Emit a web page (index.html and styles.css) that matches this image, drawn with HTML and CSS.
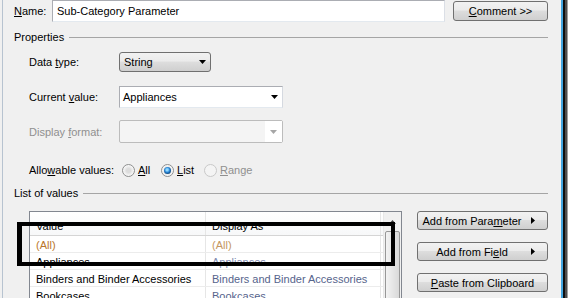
FILE: index.html
```html
<!DOCTYPE html>
<html lang="en">
<head>
  <meta charset="UTF-8" />
  <title>Edit Parameter</title>
  <link rel="stylesheet" href="styles.css">
</head>
<body>

<div class="window">
  <div class="dialog">

    <div class="name-row">
      <span class="name-label"><u>N</u>ame:</span>
      <div class="textbox name-box">Sub-Category Parameter</div>
      <button class="btn comment-btn"><u>C</u>omment &gt;&gt;</button>
    </div>

    <div class="group-title props-title">Properties</div>

    <div class="field row-type">
      <span class="field-label">Data <u>t</u>ype:</span>
      <div class="btn select">
        <span>String</span>
        <svg width="7" height="4" viewBox="0 0 7 4"><polygon points="0,0 7,0 3.5,4" fill="#000"/></svg>
      </div>
    </div>

    <div class="field row-current">
      <span class="field-label">Current <u>v</u>alue:</span>
      <div class="combo">
        <span>Appliances</span>
        <svg width="7" height="4" viewBox="0 0 7 4"><polygon points="0,0 7,0 3.5,4" fill="#000"/></svg>
      </div>
    </div>

    <div class="field row-format">
      <span class="field-label disabled">Display <u>f</u>ormat:</span>
      <div class="combo combo-off">
        <span class="combo-fill"></span>
        <span class="combo-drop">
          <svg width="7" height="4" viewBox="0 0 7 4"><polygon points="0,0 7,0 3.5,4" fill="#a6a6a6"/></svg>
        </span>
      </div>
    </div>

    <div class="field row-allow">
      <span class="field-label">Allo<u>w</u>able values:</span>
      <div class="choices">
        <span class="choice choice-all"><span class="radio"></span><span><u>A</u>ll</span></span>
        <span class="choice choice-list"><span class="radio on"><span class="dot"></span></span><span><u>L</u>ist</span></span>
        <span class="choice disabled"><span class="radio off"></span><span><u>R</u>ange</span></span>
      </div>
    </div>

    <div class="group-title list-title">List of values</div>

    <div class="values">
      <div class="listbox">
        <div class="cols">
          <div class="row head">
            <div class="cell c1">Value</div>
            <div class="cell c2">Display As</div>
          </div>
          <div class="row">
            <div class="cell c1 all">(All)</div>
            <div class="cell c2 all-alias">(All)</div>
          </div>
          <div class="row">
            <div class="cell c1">Appliances</div>
            <div class="cell c2 alias-light">Appliances</div>
          </div>
          <div class="row">
            <div class="cell c1">Binders and Binder Accessories</div>
            <div class="cell c2 alias">Binders and Binder Accessories</div>
          </div>
          <div class="row">
            <div class="cell c1">Bookcases</div>
            <div class="cell c2 alias">Bookcases</div>
          </div>
        </div>
        <div class="scrollbar">
          <div class="sb-up">
            <svg width="7" height="4" viewBox="0 0 7 4"><polygon points="0,4 7,4 3.5,0" fill="#3c3c3c"/></svg>
          </div>
          <div class="sb-thumb"></div>
        </div>
      </div>

      <div class="side">
        <button class="btn more">
          <span class="more-label">Add from Para<u>m</u>eter</span>
          <span class="caret"><svg width="4" height="7" viewBox="0 0 4 7"><polygon points="0,0 4,3.5 0,7" fill="#000"/></svg></span>
        </button>
        <button class="btn more">
          <span class="more-label">Add from Fi<u>e</u>ld</span>
          <span class="caret"><svg width="4" height="7" viewBox="0 0 4 7"><polygon points="0,0 4,3.5 0,7" fill="#000"/></svg></span>
        </button>
        <button class="btn side-btn"><u>P</u>aste from Clipboard</button>
      </div>
    </div>

  </div>
  <div class="frame"></div>
</div>

<div class="callout"></div>

</body>
</html>
```

FILE: styles.css
```css
body {
  margin: 0;
  background: #f0f0f0;
  font-family: "Liberation Sans", Arial, sans-serif;
  font-size: 11px;
  color: #000;
  overflow: hidden;
}

u {
  text-decoration: underline;
  text-underline-offset: 1px;
}

.window {
  display: flex;
  width: 568px;
  height: 298px;
}

.dialog {
  width: 559px;
  margin-left: 2px;
  border-left: 1px solid #b7c3d0;
  padding: 0 13px 0 11px;
  box-sizing: border-box;
}

.frame {
  width: 7px;
  box-sizing: border-box;
  border-left: 2px solid #42a5e0;
  background: linear-gradient(to right, #0e0e0e 0 2px, #4d4d4d 2px 4px, #a0a0a0 4px);
}

/* buttons */
.btn {
  box-sizing: border-box;
  border: 1px solid #707070;
  border-radius: 3px;
  background: linear-gradient(#f2f2f2, #ebebeb 45%, #dddddd 50%, #cfcfcf);
  font: inherit;
  color: #000;
  padding: 0;
}

/* name row */
.name-row {
  display: flex;
  align-items: center;
  height: 22px;
}

.name-label {
  width: 38px;
}

.textbox {
  box-sizing: border-box;
  height: 22px;
  border: 1px solid #abadb3;
  border-right-color: #dbdfe6;
  border-bottom-color: #e3e9ef;
  background: #fff;
  padding: 0 4px;
  line-height: 20px;
}

.name-box {
  width: 393px;
}

.comment-btn {
  margin-left: 8px;
  width: 95px;
  height: 20px;
}

/* group headings */
.group-title {
  display: flex;
  align-items: center;
  height: 14px;
}

.group-title::after {
  content: "";
  flex: 1;
  border-top: 1px solid #a5a5a5;
  margin-left: 5px;
}

.props-title {
  margin-top: 8px;
}

.list-title {
  margin-top: 7px;
}

/* property rows */
.field {
  display: flex;
  align-items: center;
  padding-left: 15px;
}

.field-label {
  width: 90px;
}

.disabled {
  color: #8f8f8f;
}

.row-type {
  margin-top: 8px;
  height: 20px;
}

.row-current {
  margin-top: 14px;
  height: 22px;
}

.row-format {
  margin-top: 12px;
  height: 23px;
}

.row-allow {
  margin-top: 18px;
  height: 18px;
}

.select {
  width: 92px;
  height: 20px;
  display: flex;
  align-items: center;
  justify-content: space-between;
  padding: 0 4px 0 4px;
}

.combo {
  box-sizing: border-box;
  width: 164px;
  height: 22px;
  border: 1px solid #abadb3;
  border-right-color: #d5d9e0;
  border-bottom-color: #e3e9ef;
  background: #fff;
  display: flex;
  align-items: center;
  justify-content: space-between;
  padding: 0 4px 0 3px;
}

.combo-off {
  height: 23px;
  padding: 0;
  border: 1px solid #bcbcbc;
  border-radius: 2px;
  background: #f4f4f4;
  align-items: stretch;
}

.combo-fill {
  flex: 1;
}

.combo-drop {
  width: 17px;
  background: #fff;
  display: flex;
  align-items: center;
  justify-content: center;
}

/* radios */
.choices {
  display: flex;
  align-items: center;
  margin-left: 3px;
}

.choice {
  display: flex;
  align-items: center;
  gap: 3px;
}

.choice-all {
  width: 39px;
}

.choice-list {
  width: 43px;
}

.radio {
  box-sizing: border-box;
  width: 13px;
  height: 13px;
  border-radius: 50%;
  border: 1px solid #8e8f8f;
  background: radial-gradient(circle at 50% 50%, #dcdcdc 0 2px, #eeeeee 4px, #fbfbfb 6px);
  display: flex;
  align-items: center;
  justify-content: center;
}

.radio.off {
  border-color: #c9c9c9;
  background: #f4f4f4;
}

.dot {
  width: 7px;
  height: 7px;
  border-radius: 50%;
  background: radial-gradient(circle at 45% 40%, #8fd8ff 0 1px, #2a86d6 2.5px, #0f4c86 4px);
}

/* list of values */
.values {
  display: flex;
  margin-top: 11px;
  padding-left: 15px;
}

.listbox {
  box-sizing: border-box;
  width: 373px;
  height: 100px;
  border: 1px solid #828790;
  background: #fff;
  display: flex;
}

.cols {
  width: 354px;
}

.row {
  display: flex;
  height: 16px;
  border-bottom: 1px solid #ececec;
}

.row.head {
  height: 23px;
  border-bottom-color: #d5d5d5;
  background: linear-gradient(#ffffff, #f7f8f9);
}

.cell {
  box-sizing: border-box;
  line-height: 18px;
  padding-left: 6px;
  white-space: nowrap;
  overflow: hidden;
}

.head .cell {
  line-height: 20px;
  padding-top: 4px;
}

.c1 {
  width: 176px;
  border-right: 1px solid #e6e6e6;
}

.c2 {
  width: 175px;
  border-right: 1px solid #e6e6e6;
}

.all {
  color: #b9762a;
}

.all-alias {
  color: #c4975f;
}

.alias-light {
  color: #7f8cb0;
}

.alias {
  color: #56648c;
}

.scrollbar {
  width: 17px;
  display: flex;
  flex-direction: column;
  background: #f0f0f0;
  border-left: 1px solid #e8e8e8;
}

.sb-up {
  height: 19px;
  display: flex;
  align-items: center;
  justify-content: center;
}

.sb-thumb {
  flex: 1;
  margin: 0 1px;
  border: 1px solid #979797;
  border-radius: 2px;
  background: linear-gradient(to right, #f3f3f3, #e6e6e6 50%, #d9d9d9);
}

.side {
  margin-left: 15px;
  display: flex;
  flex-direction: column;
  gap: 12px;
}

.side .btn {
  width: 131px;
  height: 19px;
}

.more {
  display: flex;
  align-items: center;
}

.more-label {
  flex: 1;
  text-align: center;
}

.caret {
  width: 21px;
  display: flex;
  padding-left: 5px;
  box-sizing: border-box;
}

/* black annotation frame drawn over the list */
.callout {
  position: absolute;
  left: 17px;
  top: 222px;
  width: 378px;
  height: 44px;
  box-sizing: border-box;
  border: 4px solid #000;
  border-left-width: 5px;
}
```
